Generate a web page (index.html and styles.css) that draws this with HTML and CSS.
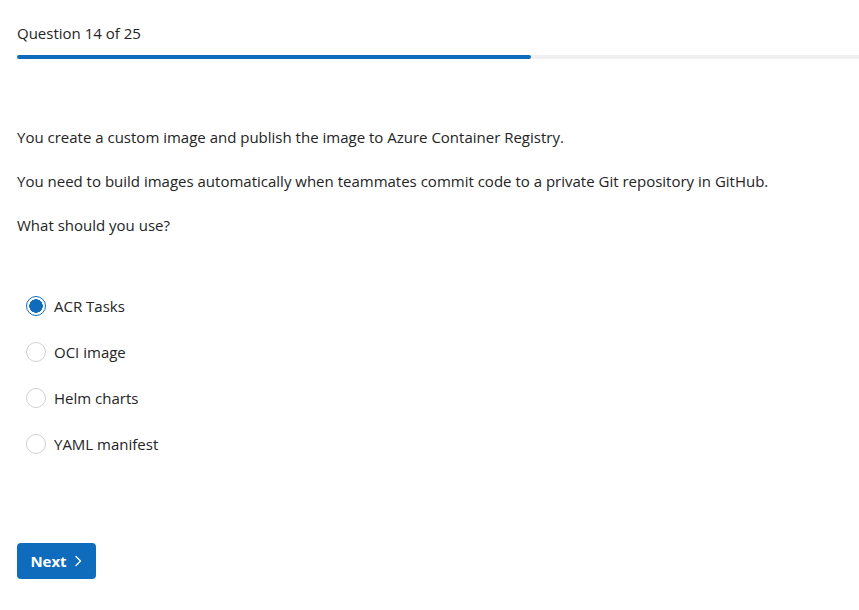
FILE: index.html
```html
<!DOCTYPE html>
<html lang="en">
<head>
<meta charset="utf-8">
<title>Question 14 of 25</title>
<link rel="stylesheet" href="styles.css">
</head>
<body>
<div class="page">
  <header class="header">
    <div class="count">Question 14 of 25</div>
    <div class="track"><div class="fill" style="width: 61.05%"></div></div>
  </header>
  <section class="question">
    <p>You create a custom image and publish the image to Azure Container Registry.</p>
    <p>You need to build images automatically when teammates commit code to a private Git repository in GitHub.</p>
    <p>What should you use?</p>
  </section>
  <ul class="options">
    <li class="option selected"><span class="radio"></span><span class="label">ACR Tasks</span></li>
    <li class="option"><span class="radio"></span><span class="label">OCI image</span></li>
    <li class="option"><span class="radio"></span><span class="label">Helm charts</span></li>
    <li class="option"><span class="radio"></span><span class="label">YAML manifest</span></li>
  </ul>
  <div class="actions">
    <button class="next">Next <svg width="10" height="12" viewBox="0 0 10 12"><path d="M3 1.5 L7.5 6 L3 10.5" fill="none" stroke="#fff" stroke-width="1.3" stroke-linecap="round" stroke-linejoin="round"/></svg></button>
  </div>
</div>
</body>
</html>
```
FILE: styles.css
```css
html, body {
  margin: 0;
  padding: 0;
  background: #fff;
}
body {
  font-family: "Open Sans", "Noto Sans", sans-serif;
  font-size: 15px;
  color: #242424;
}
.page {
  padding: 23px 0 0 17px;
}
.count {
  line-height: 20px;
  height: 20px;
}
.track {
  margin-top: 12px;
  height: 4px;
  background: #f0f0f0;
}
.fill {
  height: 4px;
  background: #0f6cbd;
  border-radius: 2px;
}
.question {
  margin-top: 68px;
}
.question p {
  margin: 0 0 24px 0;
  line-height: 20px;
}
.options {
  list-style: none;
  margin: 61px 0 0 0;
  padding: 0 0 0 9px;
  display: flex;
  flex-direction: column;
  gap: 26px;
}
.option {
  display: flex;
  align-items: center;
  height: 20px;
  gap: 8px;
}
.radio {
  box-sizing: border-box;
  width: 20px;
  height: 20px;
  border-radius: 50%;
  border: 1px solid #d1d1d1;
  background: #fff;
  flex: none;
}
.selected .radio {
  border: 1.5px solid #0f6cbd;
  background: radial-gradient(circle, #0f6cbd 0 6.5px, #fff 7px);
}
.label {
  line-height: 20px;
}
.actions {
  margin-top: 89px;
}
.next {
  box-sizing: border-box;
  height: 36px;
  width: 79px;
  border: none;
  border-radius: 4px;
  background: #0f6cbd;
  color: #fff;
  font-family: inherit;
  font-size: 15px;
  font-weight: 700;
  display: flex;
  align-items: center;
  justify-content: center;
  gap: 6px;
  padding: 0;
  cursor: pointer;
}
```
